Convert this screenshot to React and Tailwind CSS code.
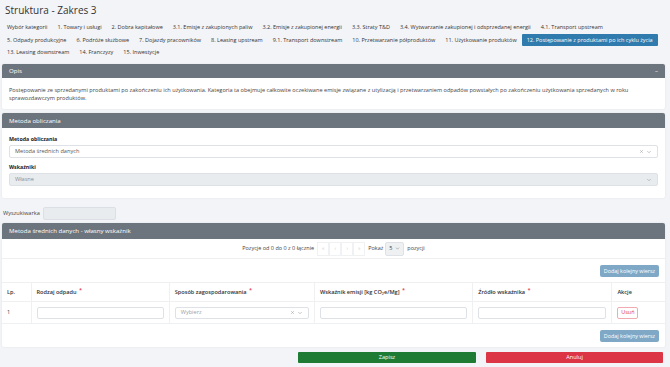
import { X, ChevronDown } from "lucide-react";

const tabRows = [
  [
    "Wybór kategorii",
    "1. Towary i usługi",
    "2. Dobra kapitałowe",
    "3.1. Emisje z zakupionych paliw",
    "3.2. Emisje z zakupionej energii",
    "3.3. Straty T&D",
    "3.4. Wytwarzanie zakupionej i odsprzedanej energii",
    "4.1. Transport upstream",
  ],
  [
    "5. Odpady produkcyjne",
    "6. Podróże służbowe",
    "7. Dojazdy pracowników",
    "8. Leasing upstream",
    "9.1. Transport downstream",
    "10. Przetwarzanie półproduktów",
    "11. Użytkowanie produktów",
    "12. Postępowanie z produktami po ich cyklu życia",
  ],
  ["13. Leasing downstream", "14. Franczyzy", "15. Inwestycje"],
];

const activeTab = "12. Postępowanie z produktami po ich cyklu życia";

function CardHeader({ children, right }) {
  return (
    <div className="flex items-center justify-between bg-[#6c757d] px-[7px] text-[6.1px] text-white rounded-t-[2px]">
      <span>{children}</span>
      {right}
    </div>
  );
}

function Req() {
  return <span className="ml-[1px] align-top text-[5.6px] leading-none text-[#dc3545]">*</span>;
}

function SelectBox({ value, placeholder, disabled, clearable, className }) {
  return (
    <div
      className={
        "flex items-center justify-between rounded-[2px] border border-[#dee2e6] px-[5px] text-[5.6px] " +
        (disabled ? "bg-[#e9ecef] text-[#8a9096] " : "bg-white text-[#555] ") +
        className
      }
    >
      <span className={placeholder ? "text-[#9aa0a6]" : ""}>{value || placeholder}</span>
      <span className="flex items-center gap-[2px] text-[#777]">
        {clearable && <X size={5} strokeWidth={1.6} />}
        <ChevronDown size={6} strokeWidth={1.6} />
      </span>
    </div>
  );
}

function AddRowButton() {
  return (
    <div className="flex justify-end pr-[6px]">
      <button className="h-[12px] w-[59px] rounded-[2px] bg-[#7fa8c7] text-[5.4px] text-white">
        Dodaj kolejny wiersz
      </button>
    </div>
  );
}

export default function App() {
  return (
    <div className="min-h-[367px] bg-[#f3f4f7] pl-[2px] pr-[5px] pb-[5px] font-['Open_Sans',sans-serif] text-[#333]">
      <h1 className="h-[21px] pl-[3px] pt-[3px] text-[10px] leading-[14px] text-[#333]">
        Struktura - Zakres 3
      </h1>

      {/* category tabs */}
      <div>
        {tabRows.map((row, i) => (
          <div key={i} className="flex h-[12.5px] items-center">
            {row.map((t) => (
              <span
                key={t}
                className={
                  "flex h-[12px] items-center whitespace-nowrap px-[5px] text-[5.5px] rounded-[1px] " +
                  (t === activeTab ? "bg-[#2f7bad] text-white" : "text-[#333]")
                }
              >
                {t}
              </span>
            ))}
          </div>
        ))}
      </div>

      {/* Opis */}
      <div className="mt-[5.5px] rounded-[2px] bg-white shadow-[0_0_2px_rgba(0,0,0,0.08)]">
        <div className="h-[14px]">
          <CardHeader right={<span className="text-[6px]">–</span>}>
            <span className="leading-[14px]">Opis</span>
          </CardHeader>
        </div>
        <p className="px-[7px] pt-[8px] pb-[7px] text-[5.6px] leading-[8px] text-[#444]">
          Postępowanie ze sprzedanymi produktami po zakończeniu ich użytkowania. Kategoria ta obejmuje całkowite oczekiwane emisje związane z utylizacją i przetwarzaniem odpadów powstałych po zakończeniu użytkowania sprzedanych w roku
          <br />
          sprawozdawczym produktów.
        </p>
      </div>

      {/* Metoda obliczania */}
      <div className="mt-[4px] rounded-[2px] bg-white shadow-[0_0_2px_rgba(0,0,0,0.08)]">
        <div className="h-[15px]">
          <CardHeader>
            <span className="leading-[15px]">Metoda obliczania</span>
          </CardHeader>
        </div>
        <div className="px-[7px] pt-[7px] pb-[12px]">
          <div className="mb-[2px] h-[8px] text-[5.3px] font-bold leading-[8px] text-[#222]">Metoda obliczania</div>
          <SelectBox value="Metoda średnich danych" clearable className="h-[13px]" />
          <div className="mt-[5px] mb-[2px] h-[8px] text-[5.3px] font-bold leading-[8px] text-[#222]">Wskaźniki</div>
          <SelectBox value="Własne" disabled className="h-[13px]" />
        </div>
      </div>

      {/* Wyszukiwarka */}
      <div className="mt-[9px] flex items-center gap-[4px] pl-[1px]">
        <span className="w-[36px] text-[5.6px] text-[#444]">Wyszukiwarka</span>
        <input className="h-[13px] w-[73px] rounded-[2px] border border-[#dcdfe3] bg-[#e9ecef]" />
      </div>

      {/* table card */}
      <div className="mt-[3px] rounded-[2px] bg-white shadow-[0_0_2px_rgba(0,0,0,0.08)]">
        <div className="h-[16px]">
          <CardHeader>
            <span className="leading-[16px]">Metoda średnich danych - własny wskaźnik</span>
          </CardHeader>
        </div>

        <div className="flex h-[20px] items-center justify-center border-b border-[#eef0f2] text-[5.5px] text-[#444]">
          <span className="mr-[3px]">Pozycje od 0 do 0 z 0 łącznie</span>
          <div className="flex">
            {["«", "‹", "›", "»"].map((s) => (
              <span
                key={s}
                className="flex h-[14px] w-[12px] items-center justify-center border border-[#f0f1f3] text-[5px] text-[#ccc]"
              >
                {s}
              </span>
            ))}
          </div>
          <span className="ml-[3px] mr-[2px]">Pokaż</span>
          <span className="flex h-[14px] w-[19px] items-center justify-between rounded-[2px] border border-[#dee2e6] bg-[#eef0f2] px-[3px]">
            5 <ChevronDown size={5} strokeWidth={1.6} />
          </span>
          <span className="ml-[3px]">pozycji</span>
        </div>

        <div className="mt-[6px]">
          <AddRowButton />
        </div>

        <table className="mt-[5px] w-full table-fixed border-collapse text-[5.6px]">
          <colgroup>
            <col className="w-[29px]" />
            <col className="w-[138px]" />
            <col className="w-[145px]" />
            <col className="w-[158px]" />
            <col className="w-[139px]" />
            <col className="w-[53px]" />
          </colgroup>
          <thead>
            <tr className="h-[19px] border-y border-[#eef0f2] text-left text-[#333]">
              <th className="px-[5px] font-semibold">Lp.</th>
              <th className="border-l border-[#eef0f2] px-[5px] font-semibold">Rodzaj odpadu <Req /></th>
              <th className="border-l border-[#eef0f2] px-[5px] font-semibold">Sposób zagospodarowania <Req /></th>
              <th className="border-l border-[#eef0f2] px-[5px] font-semibold">
                Wskaźnik emisji [kg CO<sub className="text-[3.8px]">2</sub>e/Mg] <Req />
              </th>
              <th className="border-l border-[#eef0f2] px-[5px] font-semibold">Źródło wskaźnika <Req /></th>
              <th className="border-l border-[#eef0f2] px-[5px] font-semibold">Akcje</th>
            </tr>
          </thead>
          <tbody>
            <tr className="h-[22px] border-b border-[#eef0f2] text-[#444]">
              <td className="px-[5px]">1</td>
              <td className="border-l border-[#eef0f2] px-[5px]">
                <input className="block h-[12px] w-full rounded-[2px] border border-[#dee2e6] bg-white" />
              </td>
              <td className="border-l border-[#eef0f2] px-[5px]">
                <SelectBox placeholder="Wybierz" clearable className="h-[12px]" />
              </td>
              <td className="border-l border-[#eef0f2] px-[5px]">
                <input className="block h-[12px] w-full rounded-[2px] border border-[#dee2e6] bg-white" />
              </td>
              <td className="border-l border-[#eef0f2] px-[5px]">
                <input className="block h-[12px] w-full rounded-[2px] border border-[#dee2e6] bg-white" />
              </td>
              <td className="border-l border-[#eef0f2] px-[5px]">
                <button className="h-[12px] w-[21px] rounded-[2px] border border-[#f1aab1] bg-white text-[5.4px] text-[#dc3545]">
                  Usuń
                </button>
              </td>
            </tr>
          </tbody>
        </table>

        <div className="mt-[6px] pb-[5px]">
          <AddRowButton />
        </div>
      </div>

      {/* actions */}
      <div className="mt-[4.5px] flex justify-end gap-[10px] pr-[2px]">
        <button className="h-[11px] w-[178px] rounded-[1px] bg-[#1e7b34] text-[5.6px] text-white">Zapisz</button>
        <button className="h-[11px] w-[177px] rounded-[1px] bg-[#dc3545] text-[5.6px] text-white">Anuluj</button>
      </div>
    </div>
  );
}
